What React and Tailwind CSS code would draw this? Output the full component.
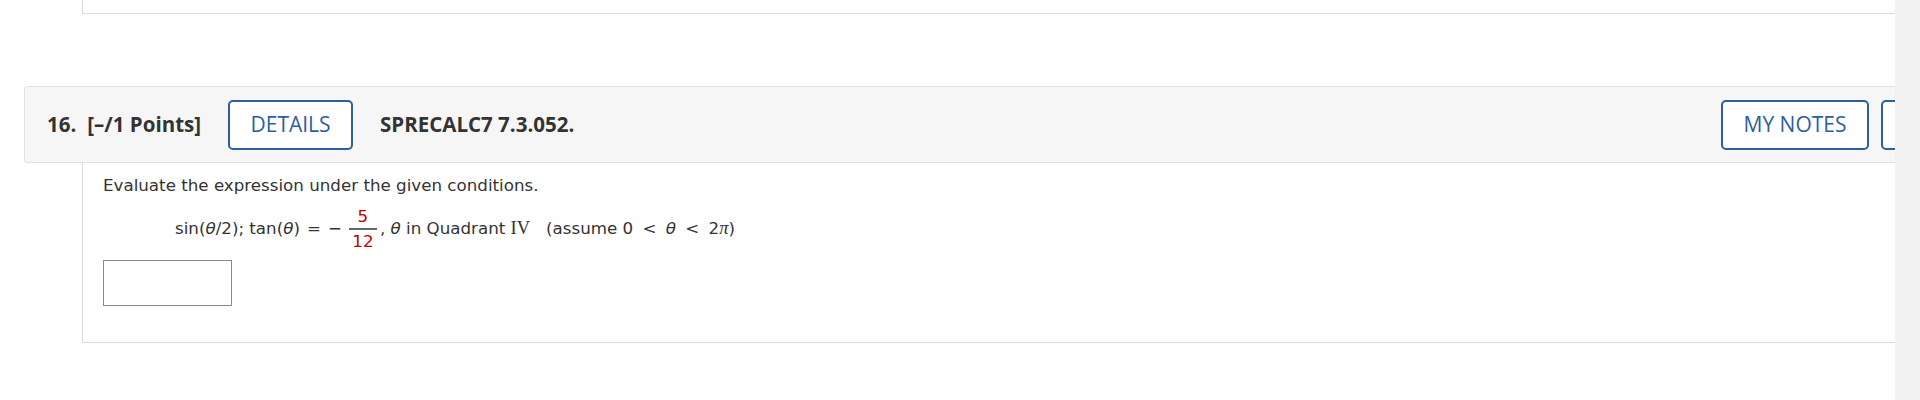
import React from "react";

const Frac = ({ top, bottom }) => (
  <span className="mx-[3px] inline-flex flex-col items-center text-[#c00000] leading-none">
    <span className="pb-[3px]">{top}</span>
    <span className="block h-[2px] w-[28px] bg-[#666]"></span>
    <span className="pt-[3px]">{bottom}</span>
  </span>
);

const OutlineButton = ({ children, className = "", label }) => (
  <button
    type="button"
    aria-label={label}
    className={`h-[50px] shrink-0 rounded-[5px] border-2 border-[#2d5f9e] bg-white text-[21px] text-[#2d5f9e] ${className}`}
  >
    {children}
  </button>
);

const serif = { fontFamily: "'Liberation Serif', serif" };

export default function App() {
  return (
    <div className="flex h-[400px] w-full overflow-hidden bg-white" style={{ fontFamily: "'Open Sans', sans-serif" }}>
      <div className="relative flex-1 overflow-hidden">
        {/* previous question, bottom edge */}
        <div className="ml-[82px] h-[14px] w-[1900px] border-b border-l border-[#dcdcdc]"></div>

        {/* question header */}
        <div className="ml-[24px] mt-[72px] flex h-[77px] w-[2000px] items-center rounded-l-[3px] border border-[#e2e2e2] bg-[#f6f6f6] pl-[22px] pr-[22px] text-[#333]">
          <span className="text-[20.5px] font-bold">16.</span>
          <span className="ml-[11px] text-[20.5px] font-bold">[–/1 Points]</span>
          <OutlineButton className="ml-[27px] w-[125px]">DETAILS</OutlineButton>
          <span className="ml-[27px] text-[20.5px] font-bold">SPRECALC7 7.3.052.</span>
          <div className="flex-1"></div>
          <OutlineButton className="w-[148px]">MY NOTES</OutlineButton>
          {/* next button, hidden behind the scrollbar */}
          <OutlineButton className="ml-[12px] w-[120px]" label="Ask your teacher"></OutlineButton>
        </div>

        {/* question body */}
        <div
          className="ml-[82px] h-[180px] w-[1900px] border-b border-l border-[#dcdcdc] pl-[20px] pt-[10px] text-[16.7px] text-[#333]"
          style={{ fontFamily: "'DejaVu Sans', Verdana, sans-serif" }}
        >
          <p>Evaluate the expression under the given conditions.</p>
          <p className="ml-[72px] mt-[10px] flex items-center">
            <span>
              sin(<i>θ</i>/2); tan(<i>θ</i>)
            </span>
            <span className="mx-[7px]">=</span>
            <span className="mr-[4px]">−</span>
            <Frac top="5" bottom="12" />
            <span className="whitespace-pre">
              , <i>θ</i> in Quadrant <span style={serif} className="text-[18.5px]">IV</span>   (assume 0 <span className="mx-[4px]">&lt;</span> <i>θ</i> <span className="mx-[4px]">&lt;</span> 2<i style={serif} className="text-[18.5px]">π</i>)
            </span>
          </p>
          <input
            type="text"
            className="mt-[11px] block h-[46px] w-[129px] border border-[#8a8a8a] bg-white"
          />
        </div>
      </div>
      <div className="h-full w-[25px] shrink-0 bg-[#f1f1f1]"></div>
    </div>
  );
}
